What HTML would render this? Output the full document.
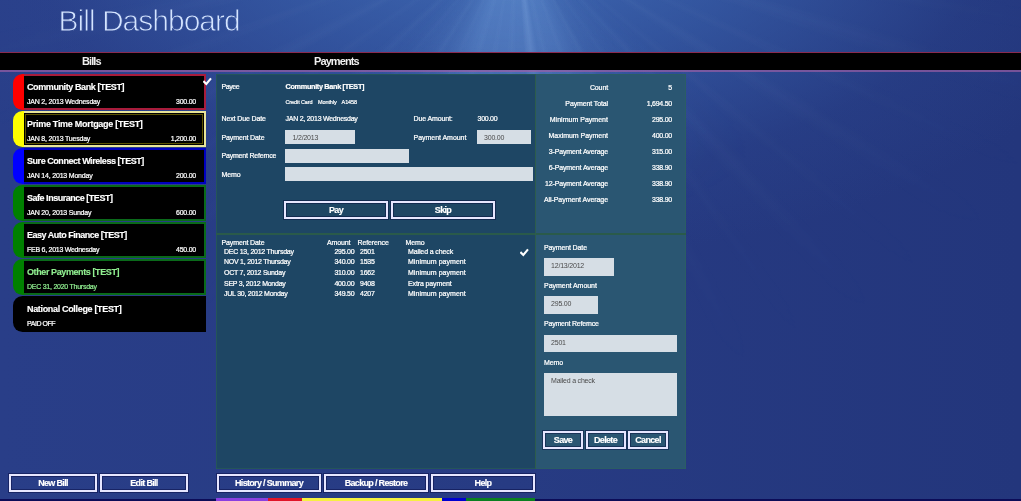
<!DOCTYPE html>
<html><head><meta charset="utf-8">
<style>
*{box-sizing:border-box;margin:0;padding:0}
html,body{width:1021px;height:501px;overflow:hidden}
body{font-family:"Liberation Sans",sans-serif;color:#fff;position:relative;
background:
 radial-gradient(ellipse 640px 330px at 510px -70px, rgba(72,122,196,.78) 0%, rgba(62,108,184,.52) 40%, rgba(48,80,155,.2) 75%, rgba(38,58,130,0) 100%),
 linear-gradient(90deg,#293e88 0%,#273b83 50%,#23367c 100%);}
#glow{left:0;top:0;width:1021px;height:501px;
background:conic-gradient(from 130deg at 516px -70px, rgba(120,170,230,0) 0deg, rgba(120,170,230,.05) 8deg, rgba(120,170,230,.16) 20deg, rgba(122,172,232,.36) 30deg, rgba(122,172,232,.40) 40deg, rgba(140,185,240,.52) 43deg, rgba(122,172,232,.42) 46deg, rgba(122,172,232,.40) 70deg, rgba(120,170,230,.2) 80deg, rgba(120,170,230,.06) 92deg, rgba(120,170,230,0) 100deg, rgba(120,170,230,0) 360deg);
-webkit-mask-image:radial-gradient(ellipse 420px 300px at 512px -70px,#000 0%,rgba(0,0,0,.85) 40%,rgba(0,0,0,.3) 70%,transparent 100%);
mask-image:radial-gradient(ellipse 420px 300px at 512px -70px,#000 0%,rgba(0,0,0,.85) 40%,rgba(0,0,0,.3) 70%,transparent 100%)}
#rays{left:0;top:0;width:1021px;height:501px;
background:repeating-conic-gradient(from 92deg at 516px -70px, rgba(200,225,255,.04) 0deg, rgba(200,225,255,0) 2.5deg, rgba(200,225,255,0) 6deg, rgba(200,225,255,.028) 8deg, rgba(200,225,255,0) 9.5deg, rgba(200,225,255,0) 13deg, rgba(200,225,255,.04) 15deg);
-webkit-mask-image:radial-gradient(ellipse 620px 480px at 516px -70px,#000 0%,rgba(0,0,0,.7) 45%,transparent 100%);
mask-image:radial-gradient(ellipse 620px 480px at 516px -70px,#000 0%,rgba(0,0,0,.7) 45%,transparent 100%)}
.abs{position:absolute}
#bar{left:0;top:52px;width:1021px;height:20px;background:#000;border-top:1px solid #8a2a50;border-bottom:2px solid rgba(160,95,165,.66);background-clip:padding-box}
.bh{top:55px;font-size:11px;font-weight:bold;line-height:12px;white-space:nowrap;letter-spacing:-0.9px;color:#f0f0f0}
.item{left:14px;width:192px;height:36px;}
.tab{position:absolute;left:-0.8px;top:0;width:11.8px;height:36px;border-radius:9.5px 0 0 9.5px}
.box{position:absolute;left:10px;top:0;right:0;height:36px;background:#000;border:2px solid #000;border-left-width:0}
.nm{position:absolute;left:13px;top:8px;font-size:9px;font-weight:bold;line-height:10px;white-space:nowrap;letter-spacing:-0.4px}
.dt{position:absolute;left:13px;top:24px;font-size:7px;line-height:8px;white-space:nowrap;letter-spacing:-0.2px}
.am{position:absolute;right:10px;top:24px;font-size:7px;line-height:8px;white-space:nowrap;letter-spacing:-0.25px}
.btn{border:2px solid #e6e6ff;font-size:9px;font-weight:bold;text-align:center;line-height:14.6px;height:18px;white-space:nowrap;letter-spacing:-0.68px;box-shadow:0 0 0 1px rgba(0,0,50,.4),inset 0 0 0 1px rgba(0,0,50,.4)}
.lbl{font-size:7px;line-height:9px;white-space:nowrap;letter-spacing:-0.12px}
.n{letter-spacing:-0.25px}
.inp{background:#d6dee5;color:#4a4a4a;font-size:7px;line-height:9px;white-space:nowrap;letter-spacing:-0.2px}
.r{text-align:right}
.lbl,.dt,.am{-webkit-text-stroke:0.22px currentColor}
.nm,.btn{-webkit-text-stroke:0.15px currentColor}
</style></head><body><div id="wrap" style="position:absolute;left:0;top:0;width:1021px;height:501px;will-change:transform">
<div id="glow" class="abs"></div><div id="rays" class="abs"></div>
<svg class="abs" style="left:0;top:0" width="320" height="50" viewBox="0 0 320 50"><defs><mask id="tm" maskUnits="userSpaceOnUse" x="0" y="0" width="320" height="50"><text x="58.6" y="31.2" font-family="Liberation Sans, sans-serif" font-size="30" letter-spacing="-1" fill="#fff" stroke="#000" stroke-width="0.9">Bill Dashboard</text></mask></defs><rect x="0" y="0" width="320" height="50" fill="#d4e4ff" mask="url(#tm)"/></svg>
<div id="bar" class="abs"></div>
<div class="abs bh" style="left:82px">Bills</div>
<div class="abs bh" style="left:314px">Payments</div>

<!-- bills -->
<div class="abs item" style="top:74px"><div class="tab" style="background:#f00"></div><div class="box" style="border-color:#a81c3c"></div><div class="nm">Community Bank [TEST]</div><div class="dt">JAN 2, 2013 Wednesday</div><div class="am">300.00</div></div>
<div class="abs item" style="top:111px"><div class="tab" style="background:#ff0"></div><div class="box" style="border-color:#e8e498;box-shadow:inset 0 0 0 1px #000,inset 0 0 0 2px #5a5200"></div><div class="nm" style="letter-spacing:-0.28px">Prime Time Mortgage [TEST]</div><div class="dt">JAN 8, 2013 Tuesday</div><div class="am">1,200.00</div></div>
<div class="abs item" style="top:148px"><div class="tab" style="background:#00f"></div><div class="box" style="border-color:#0000c0"></div><div class="nm" style="letter-spacing:-0.45px">Sure Connect Wireless [TEST]</div><div class="dt">JAN 14, 2013 Monday</div><div class="am">200.00</div></div>
<div class="abs item" style="top:185px"><div class="tab" style="background:#008000"></div><div class="box" style="border-color:#0a6a1a"></div><div class="nm" style="letter-spacing:-0.48px">Safe Insurance [TEST]</div><div class="dt">JAN 20, 2013 Sunday</div><div class="am">600.00</div></div>
<div class="abs item" style="top:222px"><div class="tab" style="background:#008000"></div><div class="box" style="border-color:#0a6a1a"></div><div class="nm" style="letter-spacing:-0.5px">Easy Auto Finance [TEST]</div><div class="dt" style="letter-spacing:-0.26px">FEB 6, 2013 Wednesday</div><div class="am">450.00</div></div>
<div class="abs item" style="top:259px;color:#90ee90"><div class="tab" style="background:#008000"></div><div class="box" style="border-color:#0a6a1a"></div><div class="nm">Other Payments [TEST]</div><div class="dt" style="letter-spacing:-0.25px">DEC 31, 2020 Thursday</div></div>
<div class="abs item" style="top:296px"><div class="tab" style="background:#000"></div><div class="box" style="border-color:#000"></div><div class="nm" style="letter-spacing:-0.33px">National College [TEST]</div><div class="dt" style="letter-spacing:-0.45px">PAID OFF</div></div>
<svg class="abs" style="left:203px;top:77px" width="9" height="9" viewBox="0 0 9 9"><path d="M0.4 4.1 L3.3 7 L8 1.3" stroke="#fff" stroke-width="2.1" fill="none"/></svg>

<!-- panels -->
<div class="abs" style="left:216px;top:74px;width:319px;height:395px;background:#1e4664;box-shadow:inset 1px 1px 0 rgba(45,105,75,.45),inset 0 -1px 0 rgba(45,105,75,.45)"></div>
<div class="abs" style="left:535px;top:74px;width:150.5px;height:395px;background:#2a5672;box-shadow:inset -1px 1px 0 rgba(45,105,75,.35),inset 0 -1px 0 rgba(45,105,75,.35)"></div>
<div class="abs" style="left:216px;top:233px;width:469.5px;height:1.5px;background:#2a5a4a"></div>
<div class="abs" style="left:535px;top:74px;width:1.3px;height:395px;background:#2c5c4c"></div>

<!-- pay form -->
<div class="abs lbl" style="left:221.5px;top:82px;letter-spacing:-0.4px">Payee</div>
<div class="abs lbl" style="left:285.5px;top:82px;font-weight:bold;font-size:7.3px;letter-spacing:-0.33px">Community Bank [TEST]</div>
<div class="abs" style="left:285.5px;top:99px;font-size:5.5px;line-height:7px;white-space:nowrap;letter-spacing:-0.1px;-webkit-text-stroke:0.2px #fff">Credit Card<span style="margin-left:5.5px">Monthly</span><span style="margin-left:5px">A1458</span></div>
<div class="abs lbl" style="left:221.5px;top:114px">Next Due Date</div>
<div class="abs lbl n" style="left:285.5px;top:114px">JAN 2, 2013 Wednesday</div>
<div class="abs lbl" style="left:413.5px;top:114px">Due Amount:</div>
<div class="abs lbl n" style="left:477.5px;top:114px">300.00</div>
<div class="abs lbl" style="left:221.5px;top:133px">Payment Date</div>
<div class="abs inp" style="left:285px;top:130px;width:70px;height:14px;padding:3px 0 0 7.5px">1/2/2013</div>
<div class="abs lbl" style="left:413.5px;top:133px;letter-spacing:-0.03px">Payment Amount</div>
<div class="abs inp" style="left:477px;top:130px;width:54px;height:14px;padding:3px 0 0 7px">300.00</div>
<div class="abs lbl" style="left:221.5px;top:151px;letter-spacing:-0.2px">Payment Refernce</div>
<div class="abs inp" style="left:285px;top:148.5px;width:123.5px;height:14px"></div>
<div class="abs lbl" style="left:221.5px;top:170px">Memo</div>
<div class="abs inp" style="left:285px;top:167px;width:248px;height:14px"></div>
<div class="abs btn" style="left:284px;top:201px;width:104px">Pay</div>
<div class="abs btn" style="left:391px;top:201px;width:104px">Skip</div>

<!-- history -->
<div class="abs lbl" style="left:221.5px;top:237.7px">Payment Date</div>
<div class="abs lbl" style="left:327px;top:237.7px">Amount</div>
<div class="abs lbl" style="left:357.5px;top:237.7px">Reference</div>
<div class="abs lbl" style="left:405.5px;top:237.7px">Memo</div>
<div class="abs lbl n" style="left:224px;top:247px">DEC 13, 2012 Thursday</div><div class="abs lbl n r" style="left:319.3px;width:35px;top:247px">295.00</div><div class="abs lbl n" style="left:360px;top:247px">2501</div><div class="abs lbl" style="left:408px;top:247px">Mailed a check</div>
<div class="abs lbl n" style="left:224px;top:257.4px">NOV 1, 2012 Thursday</div><div class="abs lbl n r" style="left:319.3px;width:35px;top:257.4px">340.00</div><div class="abs lbl n" style="left:360px;top:257.4px">1535</div><div class="abs lbl" style="left:408px;top:257.4px;letter-spacing:0.04px">Minimum payment</div>
<div class="abs lbl n" style="left:224px;top:268px">OCT 7, 2012 Sunday</div><div class="abs lbl n r" style="left:319.3px;width:35px;top:268px">310.00</div><div class="abs lbl n" style="left:360px;top:268px">1662</div><div class="abs lbl" style="left:408px;top:268px;letter-spacing:0.04px">Minimum payment</div>
<div class="abs lbl n" style="left:224px;top:278.6px">SEP 3, 2012 Monday</div><div class="abs lbl n r" style="left:319.3px;width:35px;top:278.6px">400.00</div><div class="abs lbl n" style="left:360px;top:278.6px">9408</div><div class="abs lbl" style="left:408px;top:278.6px">Extra payment</div>
<div class="abs lbl n" style="left:224px;top:289.4px">JUL 30, 2012 Monday</div><div class="abs lbl n r" style="left:319.3px;width:35px;top:289.4px">349.50</div><div class="abs lbl n" style="left:360px;top:289.4px">4207</div><div class="abs lbl" style="left:408px;top:289.4px;letter-spacing:0.04px">Minimum payment</div>
<svg class="abs" style="left:519.5px;top:248px" width="9" height="9" viewBox="0 0 9 9"><path d="M0.4 4.1 L3.3 7 L8 1.3" stroke="#fff" stroke-width="2.1" fill="none"/></svg>

<!-- stats -->
<div class="abs lbl r" style="left:536px;width:72px;top:79.5px;line-height:16px">Count<br>Payment Total<br><span style="letter-spacing:0.02px">Minimum Payment</span><br><span style="letter-spacing:-0.03px">Maximum Payment</span><br>3-Payment Average<br>6-Payment Average<br>12-Payment Average<br><span style="letter-spacing:-0.06px">All-Payment Average</span></div>
<div class="abs lbl n r" style="left:620px;width:52px;top:79.5px;line-height:16px">5<br>1,694.50<br>295.00<br>400.00<br>315.00<br>338.90<br>338.90<br>338.90</div>

<!-- edit -->
<div class="abs lbl" style="left:544px;top:243.2px">Payment Date</div>
<div class="abs inp" style="left:544px;top:258px;width:70px;height:17.7px;padding:3.4px 0 0 7px">12/13/2012</div>
<div class="abs lbl" style="left:544px;top:281.2px;letter-spacing:-0.03px">Payment Amount</div>
<div class="abs inp" style="left:544px;top:296px;width:54px;height:17.7px;padding:3.4px 0 0 7px">295.00</div>
<div class="abs lbl" style="left:544px;top:319.1px;letter-spacing:-0.2px">Payment Refernce</div>
<div class="abs inp" style="left:544px;top:334.5px;width:133px;height:17.5px;padding:3.3px 0 0 7px">2501</div>
<div class="abs lbl" style="left:544px;top:358px">Memo</div>
<div class="abs inp" style="left:544px;top:373px;width:133px;height:43px;padding:3.3px 0 0 7px">Mailed a check</div>
<div class="abs btn" style="left:543px;top:431px;width:40px">Save</div>
<div class="abs btn" style="left:585.5px;top:431px;width:40px">Delete</div>
<div class="abs btn" style="left:628px;top:431px;width:40px">Cancel</div>

<!-- bottom buttons -->
<div class="abs btn" style="left:9px;top:474px;width:88px">New Bill</div>
<div class="abs btn" style="left:100px;top:474px;width:88px">Edit Bill</div>
<div class="abs btn" style="left:217px;top:474px;width:104px">History / Summary</div>
<div class="abs btn" style="left:324px;top:474px;width:104px">Backup / Restore</div>
<div class="abs btn" style="left:431px;top:474px;width:104px">Help</div>

<!-- bottom strip -->
<div class="abs" style="left:0;top:499.4px;width:1021px;height:2px;background:#0c0c58"></div>
<div class="abs" style="left:216px;top:498.3px;width:52px;height:3px;background:#8a3fe0"></div>
<div class="abs" style="left:268px;top:498.3px;width:34px;height:3px;background:#e01428"></div>
<div class="abs" style="left:302px;top:498.3px;width:140px;height:3px;background:#f6f040"></div>
<div class="abs" style="left:442px;top:498.3px;width:24px;height:3px;background:#0000d0"></div>
<div class="abs" style="left:466px;top:498.3px;width:69px;height:3px;background:#0a8020"></div>
</div></body></html>
